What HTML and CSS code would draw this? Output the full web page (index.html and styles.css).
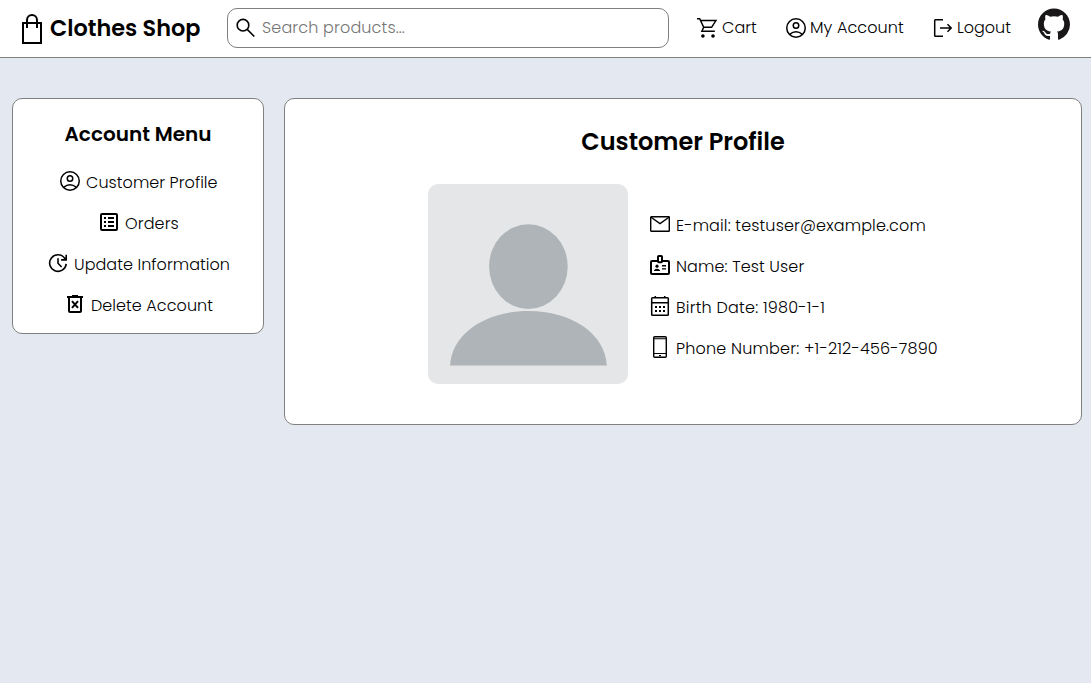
FILE: index.html
```
<!DOCTYPE html>
<html lang="en">
<head>
<meta charset="utf-8">
<title>Clothes Shop</title>
<link rel="stylesheet" href="styles.css">
</head>
<body>
<svg class="defs" width="0" height="0">
  <symbol id="account" viewBox="0 0 24 24"><g fill="none" stroke="currentColor" stroke-width="1.5"><circle cx="12" cy="12" r="9.25"/><circle cx="12" cy="9.5" r="2.75"/><path d="M5.6 18.3Q12 13.2 18.4 18.3"/></g></symbol>
</svg>
<header class="header">
  <a class="brand">
    <svg class="bag" viewBox="0 0 20 30" fill="none" stroke="currentColor"><path stroke-width="2" d="M1 9H19V29H1Z"/><path stroke-width="2" d="M5 14V6.2A5 5.2 0 0 1 15 6.2V14"/></svg>
    <span class="brand-name">Clothes Shop</span>
  </a>
  <div class="search">
    <svg class="icon" viewBox="0 0 24 24" fill="none" stroke="currentColor" stroke-width="1.6"><circle cx="9" cy="9.2" r="5.8"/><path d="M13.2 13.4L20.3 20.5"/></svg>
    <span class="placeholder">Search products...</span>
  </div>
  <nav class="nav">
    <a class="link cart"><svg class="icon" viewBox="0 0 24 24"><path fill="none" stroke="currentColor" stroke-width="1.5" d="M2 2.7H4.7L8.7 11.3H16.6L20.9 4.6H5.6M8.7 11.3L6.9 15.3H19.8"/><circle cx="7.9" cy="20" r="1.8"/><circle cx="18" cy="20" r="1.8"/></svg><span class="text t-cart">Cart</span></a>
    <a class="link my"><svg class="icon"><use href="#account"/></svg><span class="text t-my">My Account</span></a>
    <a class="link out"><svg class="icon" viewBox="0 0 24 24" fill="none" stroke="currentColor" stroke-width="1.5"><path d="M12 3.7H4.5Q3.7 3.7 3.7 4.5V19.5Q3.7 20.3 4.5 20.3H12M9 12H20M16.5 8.2L20.2 12L16.5 15.8"/></svg><span class="text t-out">Logout</span></a>
    <svg class="github" viewBox="0 0 16 16"><path fill="#191717" d="M8 0C3.58 0 0 3.58 0 8c0 3.54 2.29 6.53 5.47 7.59.4.07.55-.17.55-.38 0-.19-.01-.82-.01-1.49-2.01.37-2.53-.49-2.69-.94-.09-.23-.48-.94-.82-1.13-.28-.15-.68-.52-.01-.53.63-.01 1.08.58 1.23.82.72 1.21 1.87.87 2.33.66.07-.52.28-.87.51-1.07-1.78-.2-3.64-.89-3.64-3.95 0-.87.31-1.59.82-2.15-.08-.2-.36-1.02.08-2.12 0 0 .67-.21 2.2.82.64-.18 1.32-.27 2-.27s1.36.09 2 .27c1.53-1.04 2.2-.82 2.2-.82.44 1.1.16 1.92.08 2.12.51.56.82 1.27.82 2.15 0 3.07-1.87 3.75-3.65 3.95.29.25.54.73.54 1.48 0 1.07-.01 1.93-.01 2.2 0 .21.15.46.55.38A8.01 8.01 0 0 0 16 8c0-4.42-3.58-8-8-8z"/></svg>
  </nav>
</header>
<main class="main">
  <aside class="card menu">
    <h2 class="menu-title">Account Menu</h2>
    <a class="row"><svg class="icon"><use href="#account"/></svg><span class="text t-profile">Customer Profile</span></a>
    <a class="row"><svg class="icon" viewBox="0 0 24 24"><rect x="4" y="4" width="16" height="16" rx="1" fill="none" stroke="currentColor" stroke-width="2"/><path d="M7 7h2v2H7zM7 11h2v2H7zM7 15h2v2H7zM11 7h6v2h-6zM11 11h6v2h-6zM11 15h6v2h-6z"/></svg><span class="text t-orders">Orders</span></a>
    <a class="row"><svg class="icon" viewBox="0 0 24 24" fill="none" stroke="currentColor" stroke-width="1.6"><path d="M20.2 12.8A8.3 8.3 0 1 1 18.7 7.2L20 9M20.2 3.8V8.9H15.1M12 7.2V12.2L15.6 16"/></svg><span class="text t-update">Update Information</span></a>
    <a class="row"><svg class="icon" viewBox="0 0 24 24" fill="none" stroke="currentColor" stroke-width="2"><path d="M4 5H20M9 4H15M6 5V19Q6 20 7 20H17Q18 20 18 19V5M9 9.2L15 15.8M15 9.2L9 15.8"/></svg><span class="text t-delete">Delete Account</span></a>
  </aside>
  <section class="card profile">
    <h1 class="profile-title">Customer Profile</h1>
    <div class="details">
      <svg class="avatar" viewBox="0 0 200 200"><rect width="200" height="200" rx="10" fill="#e4e6e7"/><g fill="#aeb4b7"><ellipse cx="100.4" cy="82.6" rx="39.3" ry="42.4"/><path d="M22 181.5C24 149 58 127 100.4 127S177 149 178.8 181.5Z"/></g></svg>
      <div class="facts">
        <div class="row"><svg class="icon" viewBox="0 0 24 24" fill="none" stroke="currentColor" stroke-width="1.4"><rect x="2.7" y="4.7" width="18.6" height="14.6" rx=".6"/><path d="M3 5.3L12 11.6L21 5.3"/></svg><span class="text t-mail">E-mail: testuser@example.com</span></div>
        <div class="row"><svg class="icon" viewBox="0 0 24 24"><g fill="none" stroke="currentColor" stroke-width="2"><path d="M9.5 8H4Q3 8 3 9V20Q3 21 4 21H20Q21 21 21 20V9Q21 8 20 8H14.5"/><rect x="10" y="3" width="4" height="6.2" rx=".8"/></g><circle cx="9" cy="13.2" r="1.6"/><path d="M6 18v-.8Q9 14.4 12 17.2V18zM14 12h4v1.4h-4zM14 15.2h4v1.4h-4z"/></svg><span class="text t-name">Name: Test User</span></div>
        <div class="row"><svg class="icon" viewBox="0 0 24 24"><path fill="none" stroke="currentColor" stroke-width="1.5" d="M4.5 3.7H19.5Q20.3 3.7 20.3 4.5V20.5Q20.3 21.3 19.5 21.3H4.5Q3.7 21.3 3.7 20.5V4.5Q3.7 3.7 4.5 3.7ZM3.7 8.7H20.3M7.3 2V4.5M16.7 2V4.5"/><path d="M7 12h2v2H7zM11 12h2v2h-2zM15 12h2v2h-2zM7 16h2v2H7zM11 16h2v2h-2zM15 16h2v2h-2z"/></svg><span class="text t-birth">Birth Date: 1980-1-1</span></div>
        <div class="row"><svg class="icon" viewBox="0 0 24 24"><rect x="5.7" y="1.7" width="12.6" height="20.6" rx="1" fill="none" stroke="currentColor" stroke-width="1.4"/><path d="M6 3.2h12v1H6zM6 18h12v1.1H6zM11 20h2v1.2h-2z"/></svg><span class="text t-phone">Phone Number: +1-212-456-7890</span></div>
      </div>
    </div>
  </section>
</main>
</body>
</html>
```
FILE: styles.css
```
* { box-sizing: border-box; }
body { margin: 0; min-height: 100vh; background: #e4e8f1; color: #000; font-family: Poppins, Inter, sans-serif; font-size: 16px; line-height: 24px; }
.defs { display: block; }
.header { display: flex; height: 58px; background: #fff; border-bottom: 1px solid #808080; }
.brand { display: flex; width: 227px; padding-left: 22px; }
.bag { width: 20px; height: 30px; margin-top: 14px; }
.brand-name { margin: 10px 0 0 8px; font-size: 22.4px; line-height: 36px; font-weight: 600; white-space: nowrap; }
.search { display: flex; width: 442px; height: 40px; margin-top: 8px; padding: 7px 0 0 6px; border: 1px solid #808080; border-radius: 10px; }
.placeholder { margin-left: 4px; color: #757575; font-weight: 300; letter-spacing: .15px; }
.nav { display: flex; padding-left: 26px; }
.link { display: flex; gap: 2px; padding-top: 16px; }
.cart { width: 89px; gap: 3px; }
.my { width: 147px; }
.out { width: 107px; }
.github { width: 32px; height: 33px; margin-top: 8px; }
.icon { display: block; flex: none; width: 24px; height: 24px; }
.text { flex: none; font-weight: 300; letter-spacing: .06px; white-space: nowrap; }
.main { display: flex; align-items: flex-start; gap: 20px; padding: 40px 9px 0 12px; }
.card { background: #fff; border: 1px solid #808080; border-radius: 10px; }
.menu { width: 252px; height: 236px; padding-top: 20px; }
.menu-title { margin: 0 0 20px; font-size: 20px; line-height: 30px; font-weight: 600; text-align: center; }
.row { display: flex; gap: 4px; height: 41px; }
.row .text { margin-top: 2px; }
.menu .row { justify-content: center; }
.profile { flex: 1; height: 327px; padding-top: 25px; }
.profile-title { margin: 0; font-size: 24px; line-height: 36px; font-weight: 600; text-align: center; }
.details { display: flex; gap: 20px; margin: 24px 0 0 143px; }
.avatar { display: block; width: 200px; height: 200px; }
.facts { padding-top: 28px; }
.t-cart { width: 35px; }
.t-my { width: 94px; letter-spacing: .1px; }
.t-out { width: 54px; letter-spacing: 0; }
.t-profile { width: 132px; }
.t-orders { width: 54px; letter-spacing: .12px; }
.t-update { width: 156px; }
.t-delete { width: 122px; }
.t-mail { width: 250px; letter-spacing: .14px; }
.t-name { width: 129px; letter-spacing: .13px; }
.t-birth { width: 150px; letter-spacing: .22px; }
.t-phone { width: 263px; letter-spacing: .19px; }
```
